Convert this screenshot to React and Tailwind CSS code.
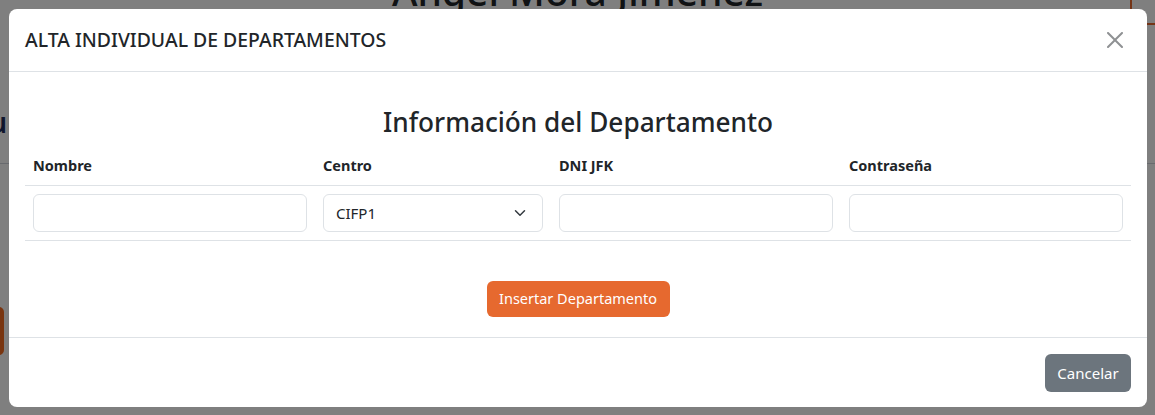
import { useState } from "react";

const columns = [
  { label: "Nombre", width: "w-[290px]" },
  { label: "Centro", width: "w-[236px]" },
  { label: "DNI JFK", width: "w-[290px]" },
  { label: "Contraseña", width: "w-[290px]" },
];

const CloseIcon = () => (
  <svg viewBox="0 0 16 16" className="w-4 h-4" fill="#212529">
    <path d="M.293.293a1 1 0 0 1 1.414 0L8 6.586 14.293.293a1 1 0 1 1 1.414 1.414L9.414 8l6.293 6.293a1 1 0 0 1-1.414 1.414L8 9.414l-6.293 6.293a1 1 0 0 1-1.414-1.414L6.586 8 .293 1.707a1 1 0 0 1 0-1.414z" />
  </svg>
);

const Chevron = () => (
  <svg viewBox="0 0 16 16" className="w-4 h-3" fill="none">
    <path
      d="m2 5 6 6 6-6"
      stroke="#343a40"
      strokeWidth="2"
      strokeLinecap="round"
      strokeLinejoin="round"
    />
  </svg>
);

const App = () => {
  const [centro] = useState("CIFP1");

  return (
    <div
      className="relative h-[415px] w-[1155px] overflow-hidden bg-white text-[#212529]"
      style={{ fontFamily: '"Noto Sans", "Open Sans", sans-serif' }}
    >
      {/* page behind the modal */}
      <div className="flex flex-col">
        <div className="flex justify-center -mt-[33px]">
          <h1 className="text-[39px] font-medium leading-[48px]">Angel Mora Jiménez</h1>
        </div>
        <div className="mt-[90px] flex w-[7px] justify-end">
          <span className="whitespace-nowrap text-[28px] font-semibold leading-[34px] text-[#1f2d5a]">
            Menu
          </span>
        </div>
        <div className="mt-[24px] border-t border-gray-300" />
        <div className="mt-[143px] h-[48px] w-[10px] -ml-[6px] rounded-md bg-[#f26a21]" />
      </div>
      <div className="absolute right-[-30px] top-[-20px] h-[45px] w-[55px] rounded-[10px] border-2 border-[#e8692e]" />

      {/* backdrop */}
      <div className="absolute inset-0 bg-black/50 pt-[9px] pl-[9px]">
        <div className="flex h-[398px] w-[1138px] flex-col rounded-lg bg-white">
          {/* header */}
          <div className="flex h-[63px] items-center justify-between border-b border-[#dee2e6] px-4">
            <h5 className="text-[19.4px] font-medium leading-[30px]">
              ALTA INDIVIDUAL DE DEPARTAMENTOS
            </h5>
            <button className="flex h-8 w-8 items-center justify-center opacity-50">
              <CloseIcon />
            </button>
          </div>

          {/* body */}
          <div className="flex flex-col px-4 pt-[33px]">
            <h3 className="text-center text-[26.2px] font-medium leading-[34px]">
              Información del Departamento
            </h3>
            <div className="mt-[6px] flex border-b border-[#dee2e6]">
              {columns.map((c) => (
                <div
                  key={c.label}
                  className={`${c.width} px-2 py-2 text-[14.5px] font-bold leading-[24px]`}
                >
                  {c.label}
                </div>
              ))}
            </div>
            <div className="flex border-b border-[#dee2e6]">
              <div className="w-[290px] p-2">
                <input className="h-[38px] w-full rounded-md border border-[#dee2e6] bg-white px-3" />
              </div>
              <div className="w-[236px] p-2">
                <div className="flex h-[38px] w-full items-center justify-between rounded-md border border-[#dee2e6] pl-3 pr-[14px] text-[15px]">
                  <span>{centro}</span>
                  <Chevron />
                </div>
              </div>
              <div className="w-[290px] p-2">
                <input className="h-[38px] w-full rounded-md border border-[#dee2e6] bg-white px-3" />
              </div>
              <div className="w-[290px] p-2">
                <input className="h-[38px] w-full rounded-md border border-[#dee2e6] bg-white px-3" />
              </div>
            </div>
            <div className="mt-[40px] flex justify-center">
              <button className="h-[36px] w-[183px] rounded-md bg-[#e6692f] text-[14.5px] text-white">
                Insertar Departamento
              </button>
            </div>
          </div>

          {/* footer */}
          <div className="mt-auto flex justify-end border-t border-[#dee2e6] px-4 pt-4 pb-[15px]">
            <button className="h-[38px] w-[86px] rounded-md bg-[#6c757d] text-[15px] text-white">
              Cancelar
            </button>
          </div>
        </div>
      </div>
    </div>
  );
};

export default App;
